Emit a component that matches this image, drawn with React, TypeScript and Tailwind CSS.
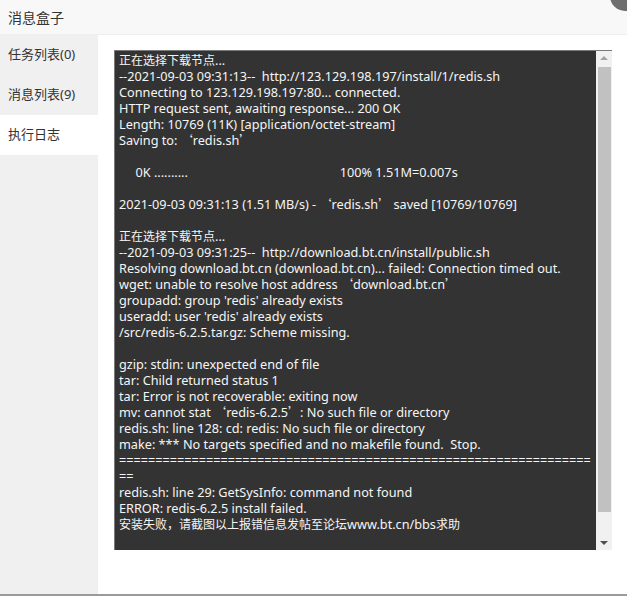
const lines: string[] = [
  "正在选择下载节点...",
  "--2021-09-03 09:31:13--  http://123.129.198.197/install/1/redis.sh",
  "Connecting to 123.129.198.197:80... connected.",
  "HTTP request sent, awaiting response... 200 OK",
  "Length: 10769 (11K) [application/octet-stream]",
  "Saving to: ‘redis.sh’",
  "",
  "     0K ..........                                              100% 1.51M=0.007s",
  "",
  "2021-09-03 09:31:13 (1.51 MB/s) - ‘redis.sh’ saved [10769/10769]",
  "",
  "正在选择下载节点...",
  "--2021-09-03 09:31:25--  http://download.bt.cn/install/public.sh",
  "Resolving download.bt.cn (download.bt.cn)... failed: Connection timed out.",
  "wget: unable to resolve host address ‘download.bt.cn’",
  "groupadd: group 'redis' already exists",
  "useradd: user 'redis' already exists",
  "/src/redis-6.2.5.tar.gz: Scheme missing.",
  "",
  "gzip: stdin: unexpected end of file",
  "tar: Child returned status 1",
  "tar: Error is not recoverable: exiting now",
  "mv: cannot stat ‘redis-6.2.5’: No such file or directory",
  "redis.sh: line 128: cd: redis: No such file or directory",
  "make: *** No targets specified and no makefile found.  Stop.",
  "=================================================================",
  "==",
  "redis.sh: line 29: GetSysInfo: command not found",
  "ERROR: redis-6.2.5 install failed.",
  "安装失败，请截图以上报错信息发帖至论坛www.bt.cn/bbs求助",
];

const tabs = [
  { label: "任务列表(0)", active: false },
  { label: "消息列表(9)", active: false },
  { label: "执行日志", active: true },
];

// CJK runs (and the wide quotes) are set smaller, in the CJK face
function LogLine({ text }: { text: string }) {
  const parts = text.split(/([\u2018\u2019\u3000-\u9fff\uff00-\uffef]+)/);
  return (
    <div className="flex h-4 items-start">
      {parts.map((p, i) =>
        p === "" ? null : i % 2 === 1 ? (
          <span key={i} className="inline-block h-4 font-['Noto_Sans_CJK_SC',sans-serif] text-[12px] leading-4">
            {p}
          </span>
        ) : (
          <span key={i} className="inline-block h-4 leading-4">
            {p}
          </span>
        ),
      )}
    </div>
  );
}

export default function App() {
  return (
    <div className="relative flex h-[596px] w-[627px] flex-col overflow-hidden bg-white font-['Noto_Sans','Noto_Sans_CJK_SC',sans-serif] text-[#333]">
      {/* close button peeking in */}
      <div className="absolute -top-[19px] -right-[13px] h-[30px] w-[30px] rounded-full bg-[#6f6f6f]" />

      {/* Header */}
      <div className="flex h-[35px] shrink-0 items-center border-b border-[#eee] bg-[#f8f8f8] pl-2 text-[14px]">
        消息盒子
      </div>

      {/* Body */}
      <div className="flex min-h-0 flex-1">
        <div className="w-[98px] shrink-0 bg-[#f0f0f0]">
          {tabs.map((t) => (
            <div
              key={t.label}
              className={`flex h-10 items-center pl-2 text-[13px] ${t.active ? "bg-white" : ""}`}
            >
              {t.label}
            </div>
          ))}
        </div>

        <div className="flex-1 pt-[15px] pl-4">
          <div className="flex h-[500px] w-[498px] border-t border-l border-[#7a7a7a]">
            <div className="flex-1 overflow-hidden bg-[#333] pt-[1px] pl-[4px] text-[12.7px] leading-4 whitespace-pre text-[#f5f5f5]">
              {lines.map((l, i) => (
                <LogLine key={i} text={l} />
              ))}
            </div>
            {/* scrollbar */}
            <div className="flex w-4 flex-col items-center bg-[#f1f1f1] py-[5px]">
              <div className="h-0 w-0 border-x-[4px] border-b-[4px] border-x-transparent border-b-[#a3a3a3]" />
              <div className="mt-[7px] h-[445px] w-[13px] bg-[#c1c1c1]" />
              <div className="flex-1" />
              <div className="h-0 w-0 border-x-[4px] border-t-[4px] border-x-transparent border-t-[#505050]" />
            </div>
          </div>
        </div>
      </div>

      <div className="h-[2px] shrink-0 bg-[#9a9a9a]" />
    </div>
  );
}
